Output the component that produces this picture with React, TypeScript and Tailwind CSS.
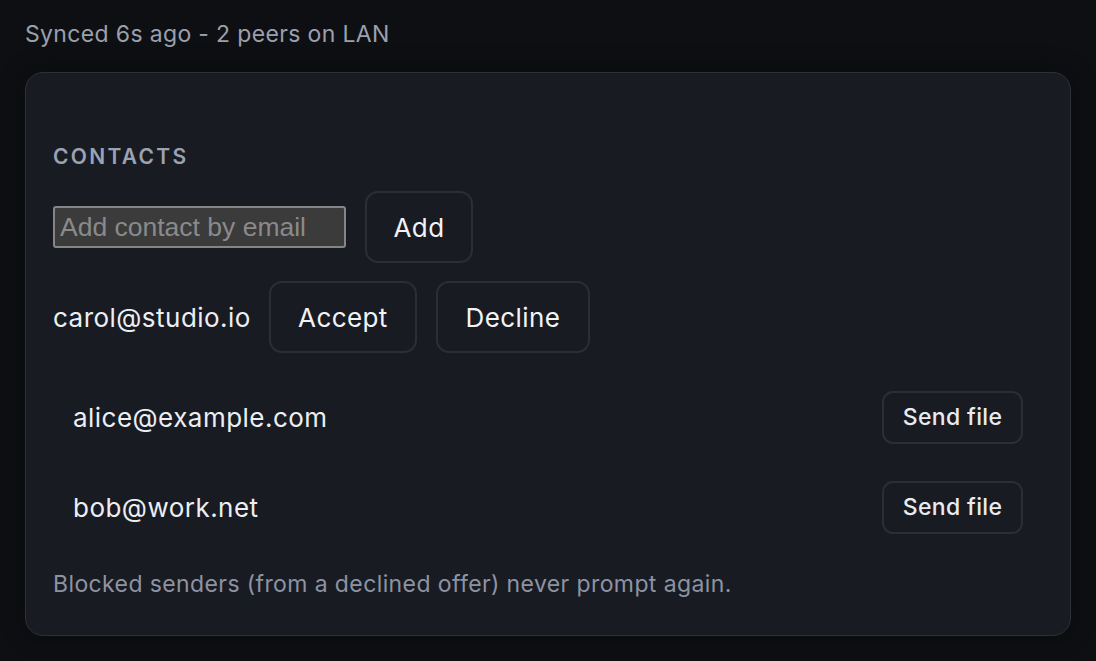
import React from 'react';

const contacts = ['alice@example.com', 'bob@work.net'];

export default function App() {
  return (
    <div
      className="min-h-[661px] w-full bg-[#0e0f13] px-[25px] pt-[18px]"
      style={{ fontFamily: 'Inter, "Noto Sans", sans-serif' }}
    >
      {/* Sync status */}
      <div className="h-[32px] text-[23px] leading-[32px] tracking-[0.015em] text-[#9aa0ad]">
        Synced 6s ago - 2 peers on LAN
      </div>

      {/* Contacts card */}
      <div className="mt-[22px] h-[564px] w-[1046px] rounded-[18px] border border-[#2f3139] bg-[#191b22] px-[27px] pt-[70px] shadow-[0_0_24px_rgba(0,0,0,0.35)]">
        <h3 className="text-[21px] font-semibold leading-[28px] tracking-[0.11em] text-[#9ba2b3]">CONTACTS</h3>

        <div className="mt-[20px] flex items-center gap-[19px]">
          <input
            placeholder="Add contact by email"
            className="h-[42px] w-[293px] rounded-[3px] border-2 border-[#858585] bg-[#3b3b3b] px-[5px] text-[26.5px] leading-none text-white placeholder:text-[#8a8a8a]"
            style={{ fontFamily: '"Liberation Sans", Arial, sans-serif' }}
          />
          <button className="h-[72px] w-[108px] rounded-[13px] border-2 border-[#2c2e36] text-[26px] tracking-[0.015em] text-[#f1f3f7]">
            Add
          </button>
        </div>

        <div className="mt-[18px] flex items-center">
          <span className="text-[26px] tracking-[0.018em] text-[#eceef3]">carol@studio.io</span>
          <button className="ml-[18px] h-[72px] w-[148px] rounded-[13px] border-2 border-[#2c2e36] text-[26px] tracking-[0.015em] text-[#f1f3f7]">
            Accept
          </button>
          <button className="ml-[19px] h-[72px] w-[154px] rounded-[13px] border-2 border-[#2c2e36] text-[26px] tracking-[0.015em] text-[#f1f3f7]">
            Decline
          </button>
        </div>

        <ul className="mt-[25px] flex flex-col gap-[12px]">
          {contacts.map((c) => (
            <li key={c} className="flex h-[78px] items-center justify-between pl-[20px] pr-[20px]">
              <span className="text-[26px] tracking-[0.018em] text-[#eceef3]">{c}</span>
              <button className="h-[53px] w-[141px] rounded-[11px] border-2 border-[#2c2e36] text-[23px] font-medium tracking-[0.015em] text-[#e9ebf0]">
                Send file
              </button>
            </li>
          ))}
        </ul>

        <p className="mt-[24px] text-[23px] leading-[28px] tracking-[0.017em] text-[#8d93a3]">
          Blocked senders (from a declined offer) never prompt again.
        </p>
      </div>
    </div>
  );
}
